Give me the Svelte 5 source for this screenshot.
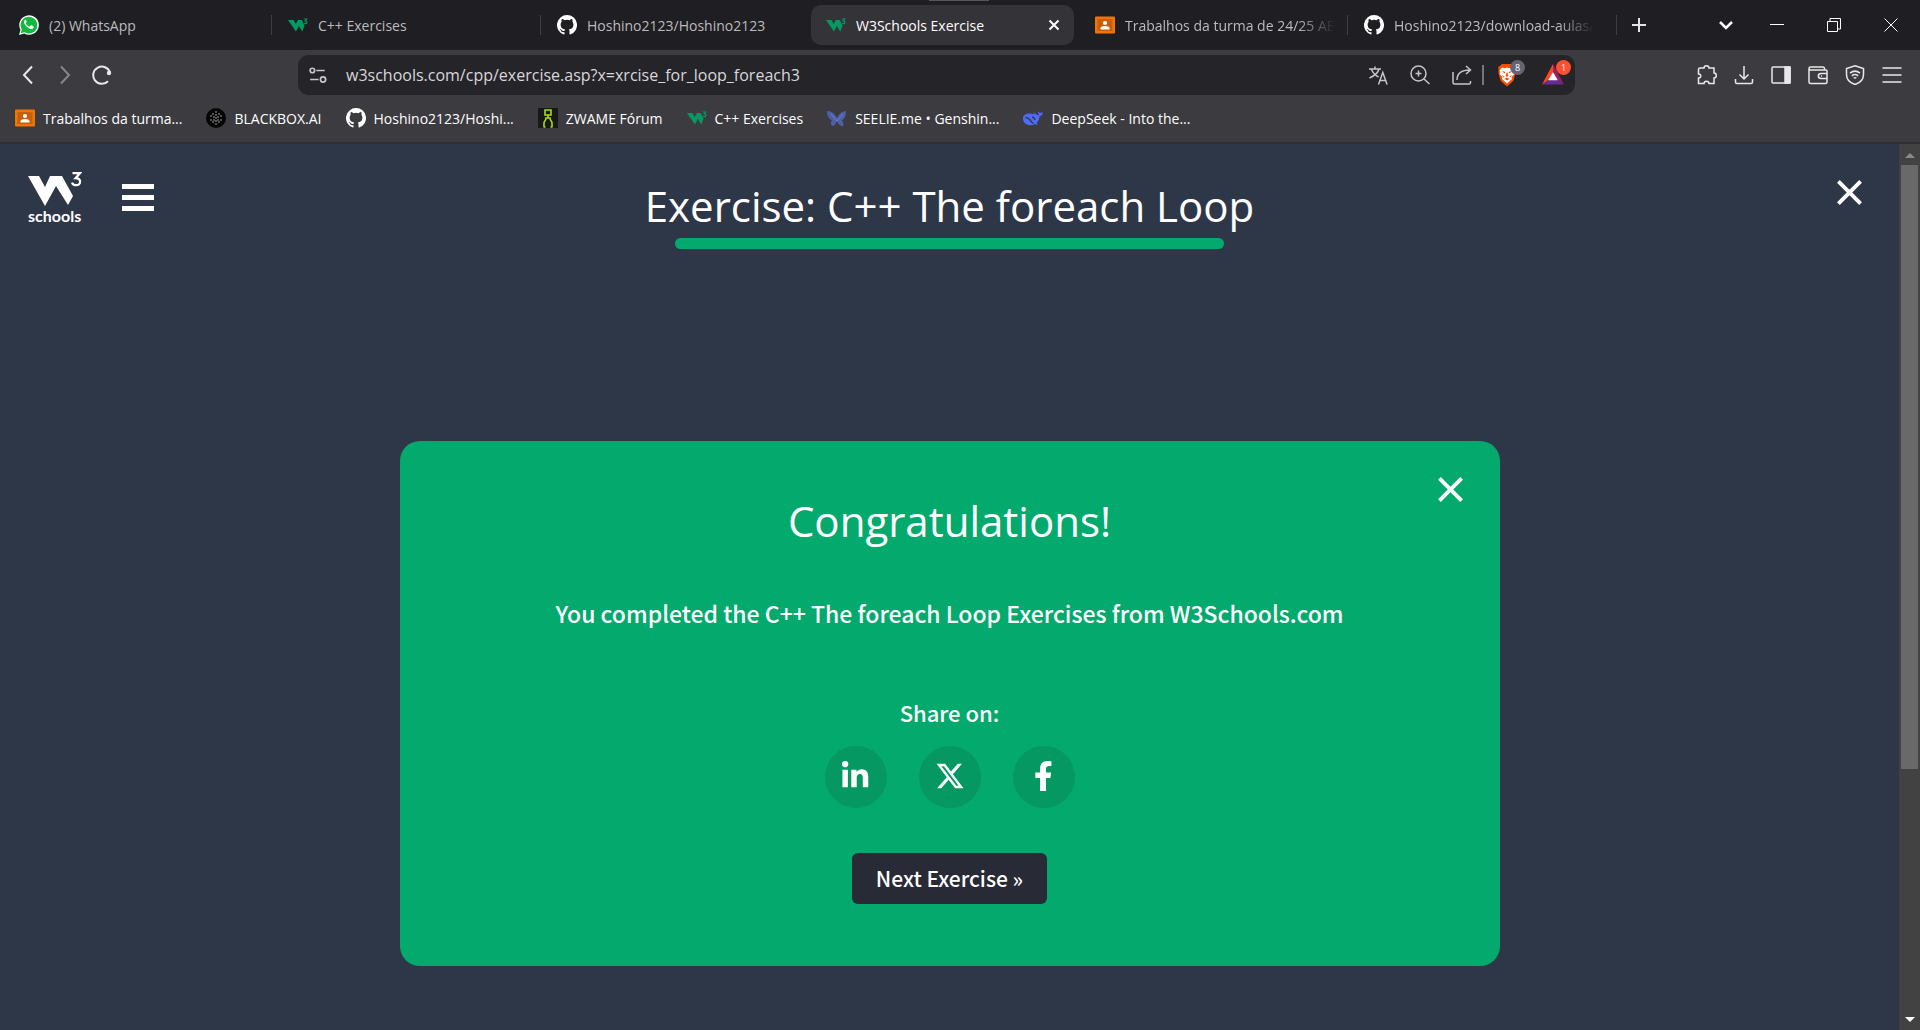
<script>
  const tabs = [
    { icon: 'whatsapp', label: '(2) WhatsApp' },
    { icon: 'w3', label: 'C++ Exercises' },
    { icon: 'github', label: 'Hoshino2123/Hoshino2123' },
    { icon: 'w3', label: 'W3Schools Exercise', active: true },
    { icon: 'classroom', label: 'Trabalhos da turma de 24/25 AE', fade: true },
    { icon: 'github', label: 'Hoshino2123/download-aulas/', fade: true }
  ];
  const bookmarks = [
    { icon: 'classroom', label: 'Trabalhos da turma...' },
    { icon: 'blackbox', label: 'BLACKBOX.AI' },
    { icon: 'github', label: 'Hoshino2123/Hoshi...' },
    { icon: 'zwame', label: 'ZWAME Fórum' },
    { icon: 'w3', label: 'C++ Exercises' },
    { icon: 'seelie', label: 'SEELIE.me • Genshin...' },
    { icon: 'deepseek', label: 'DeepSeek - Into the...' }
  ];
  const dots = [
    [10, 4], [7, 6], [13, 6], [10, 7], [5, 8], [8, 9], [12, 9], [15, 8],
    [10, 10], [5, 12], [8, 12], [12, 12], [15, 12], [7, 14], [13, 14], [10, 13], [10, 16]
  ];
  let url = $state('w3schools.com/cpp/exercise.asp?x=xrcise_for_loop_foreach3');
</script>

{#snippet favicon(name)}
  <svg class="favicon" viewBox="0 0 20 20" aria-hidden="true">
    {#if name === 'whatsapp'}
      <path fill="#fff" d="M0 20l1.500-5.200A9.800 9.800 0 1 1 5.300 18.600z" />
      <path fill="#12b83f" d="M1.700 18.300l1.100-3.700A8.400 8.400 0 1 1 5.500 17.300z" />
      <path fill="#fff" d="M7.100 5.200c-.3-.6-.9-.6-1.300-.1-1.200 1.200-1 2.800-.2 4 1.300 2.100 2.900 3.700 5.300 4.700 1.300.6 3.300-.1 3.700-1.400.1-.5.1-.9-.2-1.100l-2-1c-.3-.1-.5 0-.7.200l-.8 1c-.2.2-.4.3-.8.100-1.500-.7-2.500-1.600-3.300-3-.2-.3 0-.5.200-.7l.5-.7c.2-.2.200-.4.100-.6z" />
    {:else if name === 'w3'}
      <path fill="#059862" d="M0 5h5.500l2.200 4 2.200-4h4l2.600 5.700-2.200 5.800-3.400-5.500-3 5.500z" />
      <path fill="none" stroke="#059862" stroke-width="1.200" d="M15.800 4h3l-1.600 2c2.600 0 2 3-.1 2.700l-1-.4" />
    {:else if name === 'github'}
      <path fill="#fff" d="M10 0a10 10 0 0 0-3.160 19.490c.5.090.68-.22.680-.48v-1.870c-2.780.6-3.370-1.180-3.370-1.180-.45-1.150-1.110-1.460-1.110-1.460-.91-.62.070-.61.070-.61 1 .07 1.530 1.030 1.530 1.030.9 1.530 2.350 1.090 2.920.83.090-.65.350-1.090.64-1.340-2.220-.25-4.560-1.110-4.560-4.940 0-1.090.39-1.980 1.030-2.680-.1-.26-.45-1.280.1-2.660 0 0 .84-.27 2.750 1.030a9.500 9.500 0 0 1 5 0c1.910-1.300 2.750-1.030 2.750-1.030.55 1.380.2 2.400.1 2.660.64.7 1.030 1.590 1.030 2.680 0 3.840-2.340 4.680-4.570 4.930.36.310.68.920.68 1.850v2.750c0 .27.180.58.690.48A10 10 0 0 0 10 0z" />
    {:else if name === 'classroom'}
      <rect y="1.500" width="20" height="17" rx="1" fill="#ef7606" />
      <rect x="2.500" y="4" width="15" height="12" fill="#c95e08" />
      <circle cx="10" cy="8" r="2.100" fill="#fff" />
      <path fill="#fff" d="M5.500 14.500v-1.300c0-3 9-3 9 0v1.300z" />
    {:else if name === 'blackbox'}
      <circle cx="10" cy="10" r="10" fill="#050505" />
      {#each dots as [x, y]}
        <circle cx={x} cy={y} r=".8" fill="#bbb" />
      {/each}
    {:else if name === 'zwame'}
      <rect width="20" height="20" fill="#181818" />
      <path fill="none" stroke="#a8dc10" stroke-width="1.600" d="M7 2h6v5H7zM10 7v3M6 19v-4c0-2 2-2 2-5h4c0 3 2 3 2 5v4M7.500 19H5.500M14.500 19h-2" />
    {:else if name === 'seelie'}
      <path fill="#4c60a8" d="M0 3c5 0 8 3 10 7 2-4 5-7 9-7 0 4-1 8-4 9 1 2 2 4 1 6-3 0-5-2-6-5-1 3-3 5-5 5-2-2-1-4 0-6C1 11 0 7 0 3z" />
      <path fill="none" stroke="#6f7fc0" d="M4 6l6 7 6-7" />
    {:else if name === 'deepseek'}
      <path fill="#4d6bfe" d="M19.700 4.200c-.8.300-1.500.8-2.600.6-1-.2-1.600-.8-2.200-1.600-.1 1.500.4 2.700 1.200 3.500-.8.700-1.500.6-2.300 0-1.200-1-2.200-2.200-3.600-3 .4 1.100 1.200 1.900 2 2.800C6 4.200 0 5.500 0 10.500c0 4 3.500 6.800 7.500 6.800 1.700 0 3.100-.4 4.400-1.200.8.500 1.900 1 3 .6l-1.300-1.800c2-2 2.800-4.300 3-6.900 2.200-.2 3.300-1.500 3.100-3.800z" />
      <path fill="none" stroke="#3c3b3f" stroke-width="1.500" d="M2.500 9.500c3 0 4.500 2 6 4.500l2 1.500M9 9c1.800.2 2.700 1.500 3 3" />
    {/if}
  </svg>
{/snippet}

<div class="window">
  <div class="tabstrip">
    <span class="grip"></span>
    <div class="tabs" role="tablist">
      {#each tabs as tab, i}
        <div class="slot" class:bare={tab.active || tabs[i + 1]?.active}>
          <button class="tab" class:active={tab.active} role="tab" aria-selected={!!tab.active}>
            {@render favicon(tab.icon)}
            <span class="tab-label" class:fade={tab.fade}>{tab.label}</span>
            {#if tab.active}
              <svg class="tab-close" viewBox="0 0 12 12" aria-hidden="true"><path d="M1.500 1.500l9 9M10.500 1.500l-9 9" /></svg>
            {/if}
          </button>
        </div>
      {/each}
      <button class="plus" aria-label="New tab">
        <svg viewBox="0 0 14 14"><path d="M7 0v14M0 7h14" /></svg>
      </button>
    </div>
    <div class="controls">
      <button aria-label="Search tabs"><svg viewBox="0 0 14 14"><path stroke-width="2.500" d="M1 4l6 6 6-6" /></svg></button>
      <button aria-label="Minimize"><svg viewBox="0 0 14 14"><path d="M0 6.500h14" /></svg></button>
      <button aria-label="Restore"><svg viewBox="0 0 14 14"><path d="M.5 3.500h10v10H.5zM3 3V.5h10.500V11H11" /></svg></button>
      <button aria-label="Close window"><svg viewBox="0 0 14 14"><path d="M.5.5l13 13M13.500.5l-13 13" /></svg></button>
    </div>
  </div>

  <div class="toolbar">
    <div class="nav">
      <button aria-label="Back"><svg viewBox="0 0 20 20"><path stroke-width="2" d="M14 1.500L6 10l8 8.500" /></svg></button>
      <button class="dim" aria-label="Forward"><svg viewBox="0 0 20 20"><path stroke-width="2" d="M6 1.500l8 8.500-8 8.500" /></svg></button>
      <button aria-label="Reload"><svg viewBox="0 0 20 20"><path stroke-width="2" d="M16 16.200A8.600 8.600 0 1 1 18 7.500" /><circle cx="17" cy="8" r="2.200" fill="currentColor" stroke="none" /></svg></button>
    </div>
    <div class="omnibox">
      <button aria-label="Site information">
        <svg viewBox="0 0 16 16"><circle cx="3" cy="4" r="2" /><path d="M6.500 4H14M1 12h7.500" /><circle cx="12.500" cy="12" r="2.300" /></svg>
      </button>
      <input aria-label="Address" bind:value={url} />
      <div class="actions">
        <button aria-label="Translate"><svg viewBox="0 0 20 20"><path d="M1 4h12M7 1.500V4M11 4c-1 4-5 7-9.500 9M3.500 4.500c1.500 3.500 4 6 7 7.500M10.500 19.500l4.300-12 4.300 12M12 15.500h5.700" /></svg></button>
        <button aria-label="Zoom"><svg viewBox="0 0 20 20"><circle cx="8.500" cy="8.500" r="7.500" /><path d="M14 14l5.500 5M8.500 5.500v6M5.500 8.500h6" /></svg></button>
        <button aria-label="Share"><svg viewBox="0 0 20 20"><path d="M1 7v10.500c0 .8.700 1.500 1.500 1.500h14.500c.8 0 1.500-.7 1.500-1.500V16M5 15c0-6 4-10 13-10M14 1l4.500 4L14 9" /></svg></button>
        <span class="divider"></span>
        <button class="badged" aria-label="Brave Shields">
          <svg viewBox="0 0 20 24">
            <path fill="#fb4d04" stroke="none" d="M5 1h10l2 2 2 1-.7 3 .5 2-2.300 8.500L14 20l-4 3.500L6 20l-2.500-2.500L1.200 9l.5-2L1 4l2-1z" />
            <path fill="#fff" stroke="none" d="M5 4.500l3 .7 2-.7 2 .7 3-.7 2.500 3-.8 2 .8 1.500-3 3 .5 2L10 20.500 5 16l.5-2-3-3 .8-1.500-.8-2z" />
            <path fill="#fb4d04" stroke="none" d="M5 8l3.500 1-1 1.500zM15 8l-3.500 1 1 1.500zM9.500 9.500h1l.7 3.500-1.200 1-1.200-1zM7.300 15.800L10 14.800l2.700 1-2.700 1.700zM5 12l2.500 1.500-1 1zM15 12l-2.500 1.500 1 1z" />
          </svg>
          <span class="badge grey">8</span>
        </button>
        <button class="badged" aria-label="Brave Rewards">
          <svg viewBox="0 0 22 24">
            <path fill="#ff4724" stroke="none" d="M11 1v8l-4.500 8L0 21.500z" />
            <path fill="#9e1f63" stroke="none" d="M11 1l11 20.500L15.500 17 11 9z" />
            <path fill="#662d91" stroke="none" d="M0 21.500L6.500 17h9l6.500 4.500z" />
            <path fill="#fff" stroke="none" d="M11 9l4.800 8.300H6.200z" />
          </svg>
          <span class="badge red">1</span>
        </button>
      </div>
    </div>
    <div class="tools">
      <button aria-label="Extensions"><svg viewBox="0 0 20 20"><path d="M3 3h4c0-3 5-3 5 0h5v5c3 0 3 5 0 5v5.500h-5c0-3-5-3-5 0H1.500V13c3 0 3-4 0-4V4.500C1.500 3.500 2 3 3 3z" /></svg></button>
      <button aria-label="Downloads"><svg viewBox="0 0 20 20"><path d="M10 1v13M5.500 9.500L10 14l4.500-4.500M1.500 14v3c0 1 .5 1.500 1.500 1.500h14c1 0 1.500-.5 1.500-1.500v-3" /></svg></button>
      <button aria-label="Sidebar"><svg viewBox="0 0 20 20"><rect x="1" y="2" width="18" height="16" rx="1" /><path fill="currentColor" d="M14 2h5v16h-5z" /></svg></button>
      <button aria-label="Wallet"><svg viewBox="0 0 20 20"><path d="M16.500 5V3.500c0-.8-.5-1.500-1.500-1.500H2.500C.5 2 .5 5 2.500 5H18c.6 0 1 .4 1 1v11c0 .8-.5 1.500-1.500 1.500h-15c-1 0-1.500-.7-1.500-1.500V3.500M19 8.500h-6c-3.500 0-3.500 5 0 5h6M13 11h1" /></svg></button>
      <button aria-label="VPN"><svg viewBox="0 0 20 20"><path d="M10 .8l8.500 2.700v6c0 5-4 8.500-8.500 10-4.500-1.500-8.500-5-8.500-10v-6zM5 8.200c3-2.500 7-2.500 10 0M6.800 10.800c2-1.600 4.400-1.600 6.400 0M8.700 13.200c.8-.6 1.800-.6 2.600 0" /></svg></button>
      <button aria-label="Menu"><svg viewBox="0 0 20 20"><path d="M.5 3h19M.5 10h19M.5 17h19" /></svg></button>
    </div>
  </div>

  <nav class="bookmarks" aria-label="Bookmarks">
    {#each bookmarks as mark}
      <a href="#bookmark">{@render favicon(mark.icon)}<span>{mark.label}</span></a>
    {/each}
  </nav>

  <div class="viewport">
    <main class="page">
      <header class="top">
        <div class="brand">
          <a class="logo" href="#home" aria-label="W3Schools home">
            <svg viewBox="0 0 54 34" aria-hidden="true">
              <path fill="#fff" d="M0 4h11l6 11 5-11h12l11 20-5 9-12-19L17 34z" />
              <path fill="none" stroke="#fff" stroke-width="2.200" d="M44.500 1.200h7.500l-4.500 5c6.500.2 5.500 7 .8 7-2.300 0-3.700-.8-4.300-2.600" />
            </svg>
            <span>schools</span>
          </a>
          <button class="burger" aria-label="Open menu"><span></span><span></span><span></span></button>
        </div>
        <div class="heading">
          <h1>Exercise: C++ The foreach Loop</h1>
          <div class="progress"></div>
        </div>
        <button class="cross" aria-label="Close exercise"><svg viewBox="0 0 28 28"><path d="M2.500 2.500l23 23M25.500 2.500l-23 23" /></svg></button>
      </header>

      <section class="card">
        <button class="cross" aria-label="Close message"><svg viewBox="0 0 28 28"><path d="M2.500 2.500l23 23M25.500 2.500l-23 23" /></svg></button>
        <h2>Congratulations!</h2>
        <p class="message">You completed the C++ The foreach Loop Exercises from W3Schools.com</p>
        <p class="share">Share on:</p>
        <div class="social">
          <a href="#linkedin" aria-label="LinkedIn"><svg viewBox="0 0 448 512"><path d="M100.280 448H7.400V148.900h92.880zM53.790 108.100C24.090 108.100 0 83.500 0 53.800a53.790 53.790 0 0 1 107.580 0c0 29.700-24.100 54.300-53.790 54.300zM447.900 448h-92.680V302.400c0-34.700-.7-79.200-48.290-79.200-48.290 0-55.690 37.700-55.690 76.700V448h-92.780V148.900h89.080v40.800h1.300c12.400-23.500 42.690-48.300 87.880-48.300 94 0 111.280 61.900 111.280 142.300V448z" /></svg></a>
          <a href="#x" aria-label="X"><svg viewBox="0 0 512 512"><path d="M389.200 48h70.600L305.600 224.200 487 464H345L233.700 318.600 106.500 464H35.800L200.700 275.500 26.800 48H172.400L272.900 180.900 389.200 48zM364.400 421.800h39.100L151.100 88h-42L364.400 421.800z" /></svg></a>
          <a href="#facebook" aria-label="Facebook"><svg viewBox="0 0 320 512"><path d="M279.140 288l14.220-92.660h-88.910v-60.130c0-25.350 12.420-50.060 52.240-50.060h40.420V6.260S260.430 0 225.360 0c-73.220 0-121.080 44.380-121.080 124.720v70.620H22.890V288h81.390v224h100.170V288z" /></svg></a>
        </div>
        <button class="next">Next Exercise »</button>
      </section>
    </main>
    <div class="scrollbar" aria-hidden="true">
      <svg class="up" viewBox="0 0 10 5"><path d="M0 5l5-5 5 5z" /></svg>
      <div class="track"><div class="thumb"></div></div>
      <svg class="down" viewBox="0 0 10 5"><path d="M0 0l5 5 5-5z" /></svg>
    </div>
  </div>
</div>

<style>
  :global(body) { margin: 0; background: #2e3748; }
  * { box-sizing: border-box; }
  button { padding: 0; border: 0; background: none; color: inherit; font: inherit; cursor: pointer; }
  a { color: inherit; text-decoration: none; }
  svg { display: block; flex: none; }
  h1, h2, p { margin: 0; }

  .window {
    display: flex;
    flex-direction: column;
    min-height: 100vh;
    color: #fff;
    font-family: "Open Sans", "Noto Sans", sans-serif;
    font-size: 14px;
  }
  .favicon { width: 20px; height: 20px; }

  .tabstrip { position: relative; display: flex; height: 50px; padding-left: 3px; background: #1f1e22; }
  .grip { position: absolute; top: 0; left: 50%; width: 60px; height: 1px; margin-left: -31px; background: #57565a; }
  .tabs { display: flex; flex: 1; min-width: 0; align-items: center; }
  .slot { display: flex; flex: 0 1 269px; min-width: 0; align-items: center; gap: 4px; padding-left: 1px; }
  .slot::after { content: ""; width: 1px; height: 20px; background: #3f3e43; }
  .slot.bare::after { background: transparent; }
  .tab { display: flex; flex: 1; min-width: 0; align-items: center; gap: 10px; height: 40px; padding: 0 14px 0 15px; border-radius: 10px; color: #bcbbbf; text-align: left; }
  .tab.active { background: #343338; color: #fff; }
  .tab-label { white-space: nowrap; }
  .tab-label.fade { mask-image: linear-gradient(to right, #000 82%, transparent); }
  .tab-close { width: 12px; height: 12px; margin-left: auto; fill: none; stroke: #fff; stroke-width: 2; }
  .plus { width: 44px; height: 40px; display: grid; place-items: center; }
  .plus svg { width: 14px; height: 14px; fill: none; stroke: #e4e4e6; stroke-width: 2; }
  .controls { display: flex; padding-right: 1px; }
  .controls button { display: grid; width: 57px; place-items: center; }
  .controls button:first-child { width: 45px; }
  .controls svg { width: 14px; height: 14px; fill: none; stroke: #fff; }

  .toolbar { display: flex; align-items: center; height: 50px; padding: 0 18px; background: #3c3b3f; color: #e8e8ea; }
  .toolbar svg { width: 20px; height: 20px; fill: none; stroke: currentColor; stroke-width: 2; }
  .nav { display: flex; flex: 0 0 280px; gap: 17px; }
  .nav .dim { color: #87868a; }
  .omnibox { display: flex; flex: 0 1 1277px; min-width: 0; align-items: center; height: 40px; padding: 0 9px 0 11px; border-radius: 11px; background: #252428; color: #c6c5c9; }
  .omnibox svg { stroke-width: 1.500; }
  .omnibox > button svg { width: 18px; height: 18px; }
  .omnibox input { flex: 1; min-width: 0; margin-left: 19px; padding: 0; border: 0; outline: 0; background: none; color: #d8d7db; font: 16px "Open Sans", sans-serif; }
  .actions { display: flex; align-items: center; gap: 22px; }
  .divider { width: 2px; height: 20px; margin: 0 -10px 0 -12px; background: #77767a; }
  .actions .badged { position: relative; margin-right: 2px; }
  .actions .badged svg { width: 22px; height: 24px; }
  .badge { position: absolute; top: -3px; right: -7px; width: 15px; height: 15px; border-radius: 8px; font-size: 9px; line-height: 15px; text-align: center; color: #fff; }
  .grey { background: #636573; }
  .red { background: #fe5030; }
  .tools { display: flex; gap: 17px; margin-left: auto; }
  .tools svg { stroke-width: 1.500; }

  .bookmarks { display: flex; align-items: center; gap: 24px; height: 44px; padding: 0 15px 6px; background: #3c3b3f; border-bottom: 2px solid #313035; }
  .bookmarks a { display: flex; align-items: center; gap: 8px; white-space: nowrap; }

  .viewport { display: flex; flex: 1; background: #2e3748; }
  .page { flex: 1; min-width: 0; padding-bottom: 64px; }
  .top { display: grid; grid-template-columns: 1fr auto 1fr; align-items: start; padding: 28px 28px 0; }
  .brand { display: flex; gap: 40px; }
  .logo { width: 54px; }
  .logo svg { width: 54px; height: 34px; }
  .logo span { display: block; font: 700 16px/20px Lato, sans-serif; }
  .burger { display: flex; flex-direction: column; gap: 6px; width: 32px; height: 27px; margin-top: 12px; }
  .burger span { width: 32px; height: 5px; background: #fff; }
  .heading { display: flex; flex-direction: column; align-items: center; }
  h1, h2 { font-weight: 400; font-size: 42px; line-height: 60px; }
  h1 { margin: 4px 0 2px; }
  .progress { width: 550px; max-width: 90%; height: 11px; border-radius: 6px; background: #04aa6d; }
  .cross { width: 27px; height: 27px; justify-self: end; }
  .cross svg { width: 27px; height: 27px; fill: none; stroke: #fff; stroke-width: 4; }
  .top .cross { margin: 7px 8px 0 0; }

  .card { position: relative; display: flex; flex-direction: column; align-items: center; max-width: 1100px; margin: 192px auto 0; padding: 50px 36px 62px; border-radius: 20px; background: #04aa6d; }
  .card .cross { position: absolute; top: 35px; right: 36px; }
  .message, .share, .next { font-family: "Noto Sans CJK JP", "Noto Sans", sans-serif; font-weight: 500; }
  .message { margin-top: 46px; font-size: 23px; line-height: 32px; text-align: center; }
  .share { margin-top: 67px; font-size: 22px; line-height: 32px; }
  .social { display: flex; gap: 32px; margin-top: 18px; }
  .social a { display: grid; place-items: center; width: 62px; height: 62px; padding-bottom: 3px; border-radius: 50%; background: #059862; }
  .social svg { height: 30px; fill: #fff; }
  .next { margin-top: 45px; padding: 0 24px; border-radius: 6px; background: #282a35; font-size: 21px; line-height: 51px; }

  .scrollbar { display: flex; flex-direction: column; align-items: center; width: 21px; padding: 9px 0 8px; background: #424242; }
  .scrollbar svg { width: 10px; height: 5px; }
  .up { fill: #8a8a8a; }
  .down { fill: #fff; }
  .track { flex: 1; width: 17px; margin: 7px 0; }
  .thumb { height: 71.5%; background: #696969; }
</style>
